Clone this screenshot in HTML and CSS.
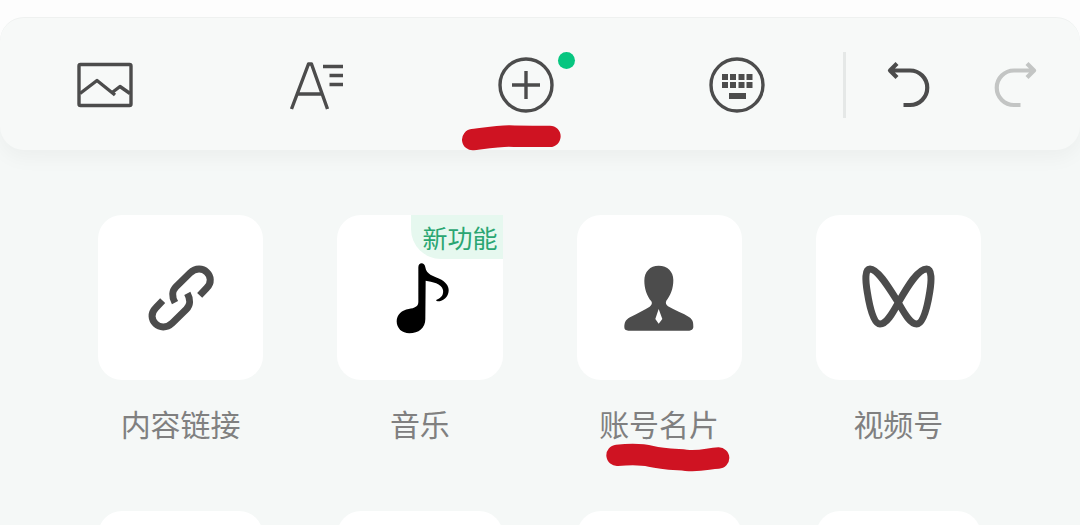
FILE: index.html
```html
<!DOCTYPE html>
<html lang="zh-CN">
<head>
    <meta charset="UTF-8">
    <meta name="viewport" content="width=device-width, initial-scale=1.0">
    <link rel="stylesheet" href="styles.css">
</head>
<body>
    <div class="sheet">
        <div class="toolbar">
            <div class="tools">
                <button type="button" class="tool">
                    <svg class="icon" viewBox="0 0 60 60">
                        <rect x="4" y="9.5" width="52" height="41" rx="1.5"/>
                        <path d="M5 38.5L22 25.5 40 40M36.5 38L45 31.5 55 38.5"/>
                    </svg>
                </button>
                <button type="button" class="tool">
                    <svg class="icon" viewBox="0 0 60 60">
                        <path d="M5.5 54L22.5 9H25.5L41.5 54M11 39H36"/>
                        <path d="M37 11.5H57M43.5 20.5H57M43.5 29.5H57"/>
                    </svg>
                </button>
                <button type="button" class="tool">
                    <svg class="icon" viewBox="0 0 60 60">
                        <circle cx="30" cy="30" r="26"/>
                        <path d="M30 16V44M16 30H44"/>
                    </svg>
                    <span class="dot"></span>
                    <svg class="mark mark-tool" viewBox="69 286 300 78">
                        <path d="M101 330C140 325 180 319 210 319C260 321 290 320 333 320"/>
                    </svg>
                </button>
                <button type="button" class="tool">
                    <svg class="icon" viewBox="0 0 60 60">
                        <circle cx="30" cy="30" r="26"/>
                        <path class="solid" d="M15 19h6v6h-6zM23 19h6v6h-6zM31.5 19h6v6h-6zM39.5 19h6v6h-6zM15 27h6v6h-6zM23 27h6v6h-6zM31.5 27h6v6h-6zM39.5 27h6v6h-6zM22 38h17v6H22z"/>
                    </svg>
                </button>
            </div>
            <div class="history">
                <button type="button" class="tool">
                    <svg class="icon bold" viewBox="0 0 60 60">
                        <path d="M12 15.5H32A17 17 0 0 1 32 50H25.5M19 8.5L12 15.5 19 22.5"/>
                    </svg>
                </button>
                <button type="button" class="tool" disabled>
                    <svg class="icon bold" viewBox="0 0 60 60">
                        <path d="M49 15.5H29A17 17 0 0 0 29 50H35.5M42 8.5L49 15.5 42 22.5"/>
                    </svg>
                </button>
            </div>
        </div>

        <div class="grid">
            <button type="button" class="card">
                <span class="tile">
                    <svg class="tile-icon line" viewBox="181 172 240 240">
                        <path d="M357 284L378 262C410 230 364 183 328 217L286 258C274 270 273 288 283 306"/>
                        <path d="M246 300L225 322C193 354 239 401 275 367L317 326C329 314 330 296 320 278"/>
                    </svg>
                </span>
                <span class="label">内容链接</span>
            </button>
            <button type="button" class="card">
                <span class="tile">
                    <svg class="tile-icon note" viewBox="179 172 240 240">
                        <path d="M294 200C294 184 313 184 315 200C318 222 339 226 357 234C375 242 386 255 385 270C384 288 370 302 352 302C346 302 346 298 352 296C365 290 370 280 368 268C364 248 335 243 316 240L315 355C315 382 295 398 267 398C245 398 229 383 229 362C229 342 245 328 265 325C283 322 294 318 294 304Z"/>
                    </svg>
                    <span class="badge">新功能</span>
                </span>
                <span class="label">音乐</span>
            </button>
            <button type="button" class="card">
                <span class="tile">
                    <svg class="tile-icon" viewBox="179 172 240 240">
                        <path fill-rule="evenodd" d="M298 195C325 195 342 213 342 238C342 265 333 285 321 300C318 306 320 312 326 317C345 328 372 338 390 350C402 358 402 368 402 380Q400 390 390 390H207Q195 390 195 380C195 368 197 358 212 350C235 338 255 328 271 318C278 313 279 307 276 302C262 285 255 262 255 240C255 213 272 195 298 195ZM298 325L288 355 298 369 309 355Z"/>
                    </svg>
                </span>
                <span class="label">账号名片
                    <svg class="mark mark-label" viewBox="140 730 372 90">
                        <path d="M173 767C205 764 250 764 275 770C310 778 345 779 380 782C430 786 445 776 478 775"/>
                    </svg>
                </span>
            </button>
            <button type="button" class="card">
                <span class="tile">
                    <svg class="tile-icon line" viewBox="175 172 240 240">
                        <path d="M296 306C270 265 235 205 211 205C195 205 197 240 203 275C210 320 222 370 241 370C262 370 280 335 296 306C325 255 355 205 381 205C397 205 396 240 390 275C382 325 370 370 351 370C330 370 310 330 296 306Z"/>
                    </svg>
                </span>
                <span class="label">视频号</span>
            </button>
            <div class="tile"></div>
            <div class="tile"></div>
            <div class="tile"></div>
            <div class="tile"></div>
        </div>
    </div>
</body>
</html>
```

FILE: styles.css
```css
body {
    margin: 0;
    height: 100vh;
    overflow: hidden;
    padding-top: 17px;
    box-sizing: border-box;
    background-color: #fdfdfd;
    font-family: "Noto Sans CJK SC", sans-serif;
}

button {
    border: none;
    padding: 0;
    background: none;
    font-family: inherit;
    cursor: pointer;
}

.sheet {
    height: 100%;
    overflow: hidden;
    background-color: #f5f8f7;
    border-radius: 24px 24px 0 0;
}

.toolbar {
    display: flex;
    height: 133px;
    background-color: #f7f9f8;
    border-top: 1px solid #eff1f0;
    border-radius: 24px;
    box-sizing: border-box;
    box-shadow: 0 8px 20px rgba(0, 0, 0, 0.04);
}

.tools {
    display: flex;
    width: 78%;
}

.history {
    display: flex;
    width: 22%;
    padding: 0 12px;
    box-sizing: border-box;
    position: relative;
}

/* divider between the tools and undo / redo */
.history::before {
    content: "";
    position: absolute;
    left: 1px;
    top: 34px;
    width: 3px;
    height: 66px;
    background-color: #e5e8e7;
}

.tool {
    display: flex;
    flex: 1;
    align-items: center;
    justify-content: center;
    position: relative;
    padding-top: 2px;
    color: #4c4c4c;
}

.tool:disabled {
    color: #c3c5c4;
}

.icon {
    width: 60px;
    height: 60px;
    fill: none;
    stroke: currentColor;
    stroke-width: 3.4;
    stroke-linejoin: round;
}

.icon.bold {
    stroke-width: 4.2;
}

.icon .solid {
    fill: currentColor;
    stroke: none;
}

.dot {
    position: absolute;
    top: 34px;
    left: calc(50% + 32px);
    width: 17px;
    height: 17px;
    border-radius: 50%;
    background-color: #07c680;
}

.mark {
    position: absolute;
    fill: none;
    stroke: #cf1322;
    stroke-width: 64;
    stroke-linecap: round;
    z-index: 1;
}

.mark-tool {
    top: 107px;
    left: calc(50% - 64px);
    width: 100px;
    height: 26px;
    overflow: visible;
}

.mark-label {
    top: 42px;
    left: 7px;
    width: 124px;
    height: 30px;
}

.grid {
    display: grid;
    grid-template-columns: repeat(4, 1fr);
    gap: 66px 74px;
    padding: 65px 99px 65px 98px;
}

.card {
    display: flex;
    flex-direction: column;
    align-items: center;
}

.tile {
    display: flex;
    align-items: center;
    justify-content: center;
    position: relative;
    width: 100%;
    aspect-ratio: 1;
    border-radius: 24px;
    background-color: #ffffff;
}

.tile-icon {
    width: 80px;
    height: 80px;
    fill: #4c4c4c;
}

.tile-icon.line {
    fill: none;
    stroke: #4c4c4c;
    stroke-width: 21;
}

.tile-icon.note {
    fill: #000000;
}

.badge {
    position: absolute;
    top: 0;
    right: 0;
    padding: 0 5px 0 11px;
    border-radius: 0 0 0 30px;
    background-color: #e6f8ef;
    color: #2aa672;
    font-size: 25px;
    line-height: 44px;
}

.label {
    position: relative;
    margin-top: 21px;
    color: #808080;
    font-size: 30px;
    line-height: 44px;
    white-space: nowrap;
}
```
